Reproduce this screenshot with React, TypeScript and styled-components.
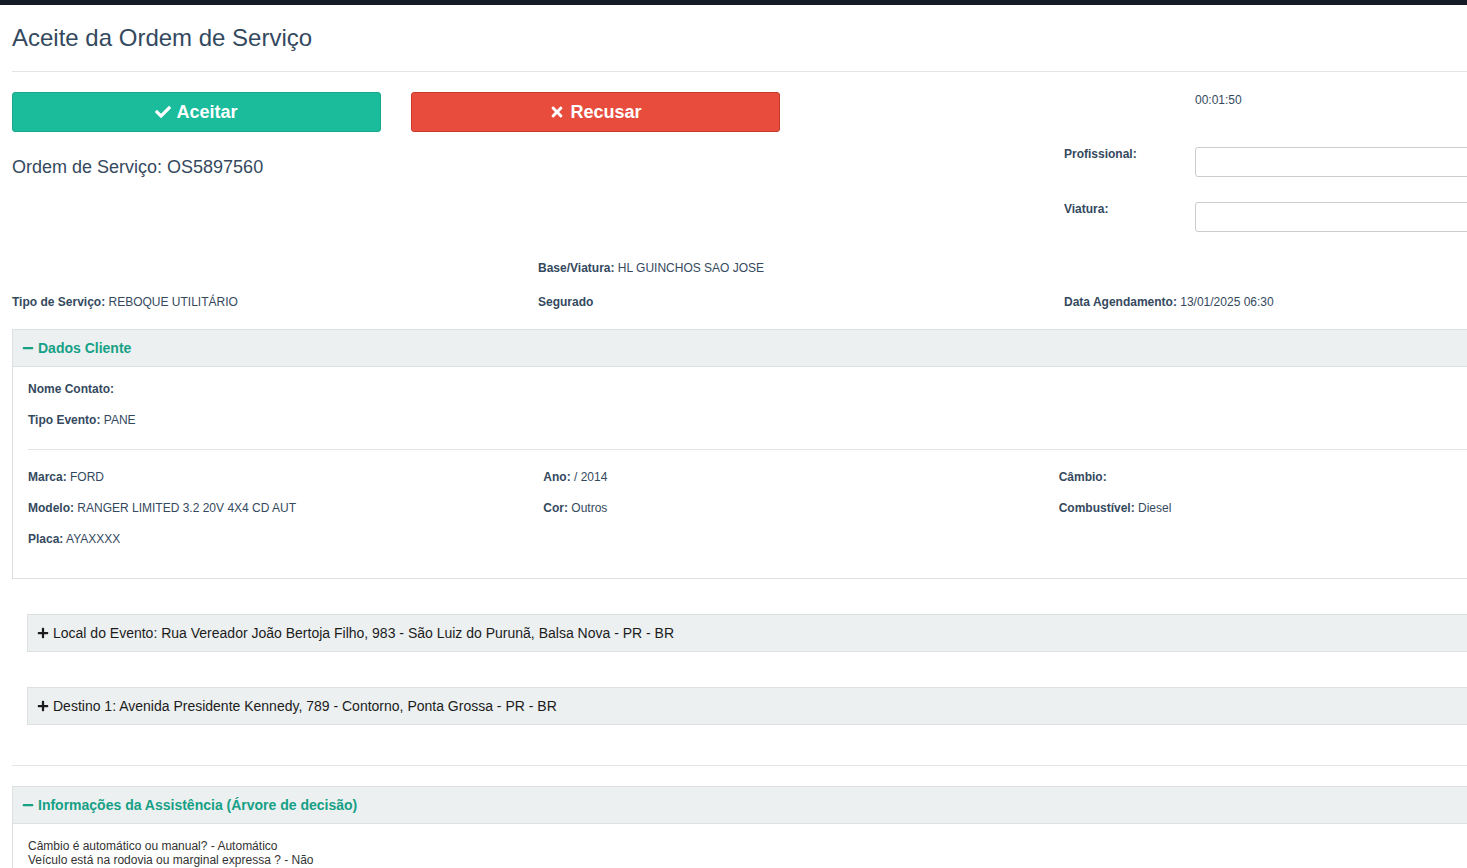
import React from 'react';
import styled, { createGlobalStyle } from 'styled-components';
import { FaCheck, FaTimes, FaMinus, FaPlus } from 'react-icons/fa';

const GlobalStyle = createGlobalStyle`
	html, body {
		margin: 0;
		padding: 0;
		overflow: hidden;
		background: #fff;
	}
	body {
		font-family: "Liberation Sans", Arial, sans-serif;
		font-size: 12px;
		color: #34495e;
	}
	* {
		box-sizing: border-box;
	}
`;

const TopBar = styled.div`
	height: 5px;
	background: #141b26;
`;

// a página é mais larga que a janela, o lado direito fica cortado
const Container = styled.div`
	margin-left: 12px;
	width: 1578px;
`;

const Title = styled.h3`
	margin: 20px 0 0;
	font-size: 24px;
	font-weight: 400;
	line-height: 26.4px;
	color: #34495e;
`;

const Divider = styled.hr<{ $top?: number; $bottom?: number }>`
	margin: ${(p) => p.$top ?? 20}px 0 ${(p) => p.$bottom ?? 20}px;
	border: 0;
	border-top: 1px solid #e2e4e5;
`;

const TopSection = styled.div`
	display: grid;
	grid-template-columns: 1052px 1fr;
`;

const ButtonRow = styled.div`
	display: flex;
	gap: 30px;
`;

const ActionButton = styled.button<{ $variant: 'ok' | 'danger' }>`
	width: 369px;
	height: 40px;
	display: flex;
	align-items: center;
	justify-content: center;
	gap: 5px;
	border-radius: 3px;
	border: 1px solid ${(p) => (p.$variant === 'ok' ? '#17a98c' : '#c9382a')};
	background: ${(p) => (p.$variant === 'ok' ? '#1abc9c' : '#e74c3c')};
	color: #fff;
	font-family: "Liberation Sans", Arial, sans-serif;
	font-size: 18px;
	font-weight: 700;
	padding: 0;
	cursor: pointer;
`;

const OrderNumber = styled.div`
	margin-top: 26px;
	font-size: 18px;
	line-height: 19.8px;
	color: #34495e;
`;

const Timer = styled.div`
	margin: 0 0 0 131px;
	line-height: 17px;
`;

const FormRow = styled.div<{ $top: number }>`
	display: grid;
	grid-template-columns: 131px 1fr;
	margin-top: ${(p) => p.$top}px;
`;

const FormLabel = styled.label`
	margin-top: -1px;
	line-height: 17px;
	font-weight: 700;
`;

const TextInput = styled.input`
	height: 30px;
	width: 100%;
	border: 1px solid #ccc;
	border-radius: 3px;
	background: #fff;
`;

const InfoGrid = styled.div<{ $top: number }>`
	display: grid;
	grid-template-columns: repeat(3, 1fr);
	margin-top: ${(p) => p.$top}px;
	line-height: 17px;
`;

const Field = styled.div`
	line-height: 17px;
`;

const Key = styled.b`
	font-weight: 700;
`;

const Panel = styled.section<{ $top: number }>`
	margin-top: ${(p) => p.$top}px;
	border: 1px solid #dde0e1;
`;

const PanelHeader = styled.div`
	display: flex;
	align-items: center;
	gap: 4px;
	padding: 8px 9px;
	line-height: 20px;
	background: #ecf0f1;
	border-bottom: 1px solid #dde0e1;
	color: #16a085;
	font-size: 14px;
	font-weight: 700;
`;

const PanelBody = styled.div`
	padding: 14px 15px 30px;
`;

const FieldList = styled.div`
	display: flex;
	flex-direction: column;
	gap: 14px;
`;

const VehicleGrid = styled.div`
	display: grid;
	grid-template-columns: repeat(3, 1fr);
	row-gap: 14px;
`;

const InnerDivider = styled.hr`
	margin: 20px 0 19px;
	border: 0;
	border-top: 1px solid #e2e4e5;
`;

const Collapsed = styled.div<{ $top: number }>`
	margin: ${(p) => p.$top}px 0 0 15px;
	display: flex;
	align-items: center;
	gap: 4px;
	height: 38px;
	padding: 0 9px;
	background: #ecf0f1;
	border: 1px solid #dde0e1;
	color: #1c1c1c;
	font-size: 14px;
`;

const AnswerBody = styled.div`
	padding: 15px 15px 20px;
	color: #333;
	line-height: 14px;
`;

const info = [
	'Câmbio é automático ou manual? - Automático',
	'Veículo está na rodovia ou marginal expressa ? - Não',
];

export default function App() {
	return (
		<>
			<GlobalStyle />
			<TopBar />
			<Container>
				<Title>Aceite da Ordem de Serviço</Title>
				<Divider />

				<TopSection>
					<div>
						<ButtonRow>
							<ActionButton $variant="ok">
								<FaCheck size={16} /> Aceitar
							</ActionButton>
							<ActionButton $variant="danger">
								<FaTimes size={16} /> Recusar
							</ActionButton>
						</ButtonRow>
						<OrderNumber>Ordem de Serviço: OS5897560</OrderNumber>
					</div>
					<div>
						<Timer>00:01:50</Timer>
						<FormRow $top={38}>
							<FormLabel>Profissional:</FormLabel>
							<TextInput />
						</FormRow>
						<FormRow $top={25}>
							<FormLabel>Viatura:</FormLabel>
							<TextInput />
						</FormRow>
					</div>
				</TopSection>

				<InfoGrid $top={28}>
					<span />
					<Field>
						<Key>Base/Viatura:</Key> HL GUINCHOS SAO JOSE
					</Field>
					<span />
				</InfoGrid>
				<InfoGrid $top={17}>
					<Field>
						<Key>Tipo de Serviço:</Key> REBOQUE UTILITÁRIO
					</Field>
					<Field>
						<Key>Segurado</Key>
					</Field>
					<Field>
						<Key>Data Agendamento:</Key> 13/01/2025 06:30
					</Field>
				</InfoGrid>

				<Panel $top={18}>
					<PanelHeader>
						<FaMinus size={12} /> Dados Cliente
					</PanelHeader>
					<PanelBody>
						<FieldList>
							<Field>
								<Key>Nome Contato:</Key>
							</Field>
							<Field>
								<Key>Tipo Evento:</Key> PANE
							</Field>
						</FieldList>
						<InnerDivider />
						<VehicleGrid>
							<Field>
								<Key>Marca:</Key> FORD
							</Field>
							<Field>
								<Key>Ano:</Key> / 2014
							</Field>
							<Field>
								<Key>Câmbio:</Key>
							</Field>
							<Field>
								<Key>Modelo:</Key> RANGER LIMITED 3.2 20V 4X4 CD AUT
							</Field>
							<Field>
								<Key>Cor:</Key> Outros
							</Field>
							<Field>
								<Key>Combustível:</Key> Diesel
							</Field>
							<Field>
								<Key>Placa:</Key> AYAXXXX
							</Field>
						</VehicleGrid>
					</PanelBody>
				</Panel>

				<Collapsed $top={35}>
					<FaPlus size={12} /> Local do Evento: Rua Vereador João Bertoja Filho, 983 - São Luiz do Purunã, Balsa Nova - PR - BR
				</Collapsed>
				<Collapsed $top={35}>
					<FaPlus size={12} /> Destino 1: Avenida Presidente Kennedy, 789 - Contorno, Ponta Grossa - PR - BR
				</Collapsed>

				<Divider $top={40} $bottom={20} />

				<Panel $top={0}>
					<PanelHeader>
						<FaMinus size={12} /> Informações da Assistência (Árvore de decisão)
					</PanelHeader>
					<AnswerBody>
						{info.map((line) => (
							<div key={line}>{line}</div>
						))}
					</AnswerBody>
				</Panel>
			</Container>
		</>
	);
}
